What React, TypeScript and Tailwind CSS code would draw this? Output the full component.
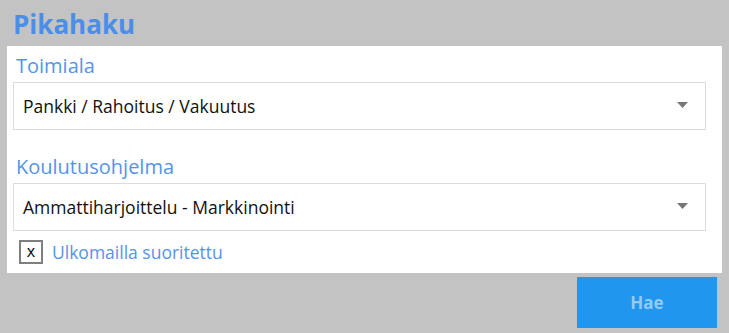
const font = { fontFamily: '"Open Sans", "Noto Sans", sans-serif' };

function Select({ value }: { value: string }) {
  return (
    <div className="flex h-[48px] items-center justify-between border border-[#dcdcdc] bg-white pl-[9px] pr-[17px]">
      <span className="text-[17.5px] text-[#111]">{value}</span>
      <svg width="11" height="6" viewBox="0 0 11 6" className="mt-[-2px]">
        <polygon points="0,0 11,0 5.5,6" fill="#777" />
      </svg>
    </div>
  );
}

export default function App() {
  return (
    <div className="h-[333px] w-[729px] bg-[#c3c3c3]" style={font}>
      <div className="h-[46px] pl-[13px] pt-[2px] text-[26px] font-bold leading-[44px] text-[#4b8ee9]">
        Pikahaku
      </div>
      <div className="mx-[7px] bg-white pb-[9px] pl-[6px] pr-[16px] pt-[7px]">
        <div className="pl-[3px] text-[20px] leading-[26px] text-[#5594e8]">Toimiala</div>
        <div className="mt-[3px]">
          <Select value="Pankki / Rahoitus / Vakuutus" />
        </div>
        <div className="mt-[24px] pl-[3px] text-[20px] leading-[26px] text-[#5594e8]">Koulutusohjelma</div>
        <div className="mt-[3px]">
          <Select value="Ammattiharjoittelu - Markkinointi" />
        </div>
        <div className="mt-[9px] flex items-center gap-[9px] pl-[6px]">
          <div className="flex h-[24px] w-[24px] items-center justify-center border-2 border-[#7f7f7f] bg-white text-[16px] leading-none text-black">
            <span className="mt-[-2px]">x</span>
          </div>
          <span className="text-[17.5px] leading-[23px] text-[#5594e8]">Ulkomailla suoritettu</span>
        </div>
      </div>
      <div className="flex justify-end pr-[12px] pt-[4px]">
        <button className="h-[51px] w-[140px] bg-[#2196ee] text-[17px] font-bold text-[#93cbf6]">Hae</button>
      </div>
    </div>
  );
}
